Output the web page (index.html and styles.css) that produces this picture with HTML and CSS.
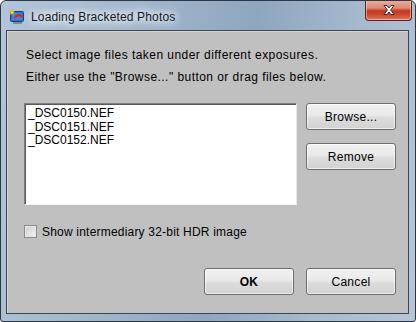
FILE: index.html
```html
<!DOCTYPE html>
<html lang="en">
<head>
  <meta charset="UTF-8" />
  <title>Loading Bracketed Photos</title>
  <link rel="stylesheet" href="styles.css">
</head>
<body>

  <div class="window">
    <div class="titlebar">
      <svg class="app-icon" width="16" height="16" viewBox="0 0 16 16">
        <rect x="1.5" y="2.5" width="13" height="10" rx="1" fill="#2f6fc4" stroke="#1c3f7a"/>
        <rect x="3" y="4" width="10" height="7" fill="#3f86d8"/>
        <path d="M5 9 C6 5, 10 4, 13 6 L13 9 C11 7, 8 7, 6 10 Z" fill="#d8261c"/>
        <rect x="4" y="13" width="9" height="2" fill="#7d8a99"/>
        <path d="M3 0.5 L3.8 2.4 L5.8 2.6 L4.2 3.8 L4.8 5.8 L3 4.6 L1.2 5.8 L1.8 3.8 L0.2 2.6 L2.2 2.4 Z" fill="#ffe14a" stroke="#d9a400" stroke-width="0.4"/>
      </svg>
      <span class="title">Loading Bracketed Photos</span>
      <div class="close-btn">
        <svg width="16" height="12" viewBox="0 0 16 12">
          <path d="M3 1.5 L6 1.5 L8 4 L10 1.5 L13 1.5 L9.6 6 L13 10.5 L10 10.5 L8 8 L6 10.5 L3 10.5 L6.4 6 Z" fill="#fff" stroke="#3a1810" stroke-width="0.9" stroke-linejoin="round"/>
        </svg>
      </div>
    </div>

    <div class="client">
      <div class="intro">
        <p>Select image files taken under different exposures.</p>
        <p>Either use the "Browse..." button or drag files below.</p>
      </div>

      <div class="files-row">
        <div class="file-list">
          <div>_DSC0150.NEF</div>
          <div>_DSC0151.NEF</div>
          <div>_DSC0152.NEF</div>
        </div>
        <div class="side-buttons">
          <button class="btn">Browse...</button>
          <button class="btn">Remove</button>
        </div>
      </div>

      <label class="check-row">
        <span class="checkbox"></span>
        <span class="check-label">Show intermediary 32-bit HDR image</span>
      </label>

      <div class="footer-buttons">
        <button class="btn btn-ok">OK</button>
        <button class="btn">Cancel</button>
      </div>
    </div>
  </div>

</body>
</html>
```

FILE: styles.css
```css
body {
  margin: 0;
  background-color: #fff;
  font-family: 'Liberation Sans', Arial, sans-serif;
  font-size: 12px;
  color: #000;
}

.window {
  width: 416px;
  height: 322px;
  box-sizing: border-box;
  border: 1px solid #2e3844;
  border-radius: 6px 6px 3px 3px;
  background: linear-gradient(100deg, #b3c5d8 0%, #a2b7cc 30%, #8ea6bf 55%, #a7bace 78%, #b6c6d7 100%);
  display: flex;
  flex-direction: column;
  overflow: hidden;
}

.titlebar {
  height: 29px;
  display: flex;
  align-items: flex-start;
  flex-shrink: 0;
}

.app-icon {
  margin: 8px 0 0 8px;
}

.title {
  margin: 9px 0 0 6px;
  font-size: 12px;
  line-height: 14px;
  letter-spacing: 0.15px;
  color: #101828;
  text-shadow: 0 0 6px #fff, 0 0 10px #fff, 0 0 14px #f2f6fa;
}

.close-btn {
  margin: -1px 3px 0 auto;
  width: 47px;
  height: 21px;
  box-sizing: border-box;
  border: 1px solid #5a2418;
  border-top: none;
  border-radius: 0 0 4px 4px;
  background: linear-gradient(#e9b1a4 0%, #dc8874 40%, #c4371f 55%, #cc4a30 75%, #dd7a60 100%);
  box-shadow: inset 0 0 0 1px rgba(255, 220, 210, 0.5);
  display: flex;
  align-items: center;
  justify-content: center;
}

.client {
  flex: 1;
  margin: 0 6px 7px 5px;
  border: 1px solid #3a4654;
  background-color: #c0c0c0;
  box-shadow: inset 1px 1px 0 #d4d4d4;
  padding: 13px 12px 0 17px;
  display: flex;
  flex-direction: column;
}

.intro p {
  margin: 0;
  padding-left: 2px;
  line-height: 22px;
  letter-spacing: 0.45px;
}

.files-row {
  display: flex;
  margin-top: 15px;
  gap: 9px;
}

.file-list {
  flex: 1;
  height: 102px;
  box-sizing: border-box;
  background-color: #fff;
  border: 1px solid;
  border-color: #808080 #e8e8e8 #f4f4f4 #808080;
  box-shadow: inset 1px 1px 0 #5a5a5a;
  padding: 3px 0 0 3px;
  line-height: 13.5px;
}

.side-buttons {
  display: flex;
  flex-direction: column;
  gap: 13px;
}

.btn {
  width: 90px;
  height: 27px;
  box-sizing: border-box;
  border: 1px solid #6e6e6e;
  border-radius: 3px;
  background: linear-gradient(#f1f1f1 0%, #e9e9e9 45%, #dcdcdc 55%, #d2d2d2 100%);
  box-shadow: inset 0 0 0 1px rgba(255, 255, 255, 0.6);
  font-family: 'Liberation Sans', Arial, sans-serif;
  font-size: 12px;
  letter-spacing: 0.3px;
  color: #000;
  padding: 0;
}

.btn-ok {
  font-weight: bold;
}

.check-row {
  display: flex;
  align-items: center;
  gap: 5px;
  margin-top: 20px;
  height: 13px;
}

.check-label {
  letter-spacing: 0.2px;
}

.checkbox {
  width: 13px;
  height: 13px;
  box-sizing: border-box;
  border: 1px solid #8a8a8a;
  background: linear-gradient(135deg, #cfcfcf, #f4f4f4);
  box-shadow: inset 0 0 0 1px #e8e8e8;
}

.footer-buttons {
  display: flex;
  justify-content: flex-end;
  gap: 12px;
  margin-top: 30px;
}
```
